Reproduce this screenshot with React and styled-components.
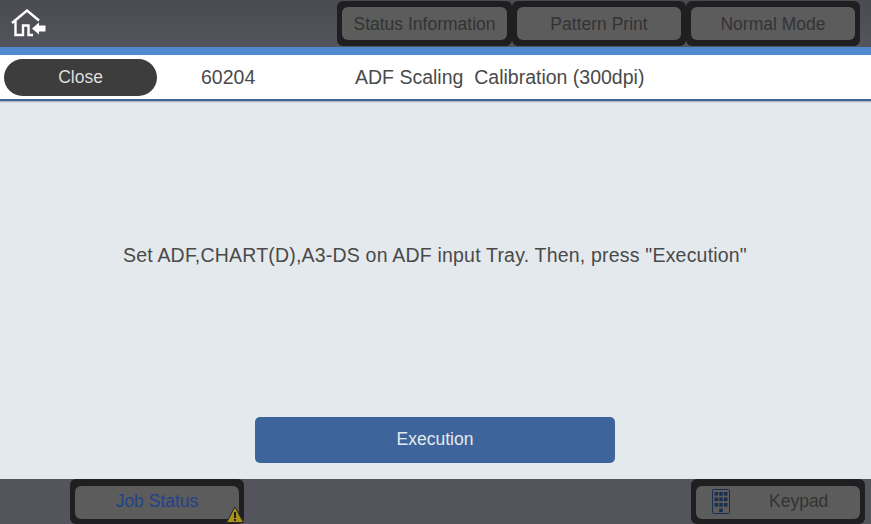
import React from 'react';
import styled, { createGlobalStyle } from 'styled-components';

const GlobalStyle = createGlobalStyle`
  html, body {
    margin: 0;
    padding: 0;
    background: #e4e9ed;
    font-family: "Liberation Sans", Arial, sans-serif;
  }
`;

const Screen = styled.div`
  width: 871px;
  height: 524px;
  display: flex;
  flex-direction: column;
  overflow: hidden;
`;

const Header = styled.header`
  height: 47px;
  box-sizing: border-box;
  padding: 1px 11px 1px 11px;
  display: flex;
  align-items: center;
  justify-content: space-between;
  background: linear-gradient(#4a4a52, #54545c);
`;

const HeaderButtons = styled.div`
  display: flex;
`;

// dark frame around the grey key
const Frame = styled.div`
  width: ${(p) => p.$width || 174}px;
  height: 45px;
  box-sizing: border-box;
  padding: ${(p) => p.$pad || '6px 5px'};
  background: #1f1f21;
  border-radius: 6px;
  display: flex;
  position: relative;
`;

const Key = styled.div`
  flex: 1;
  display: flex;
  align-items: center;
  justify-content: center;
  border-radius: 6px;
  background: #5c5c5c;
  color: ${(p) => p.$color || '#333333'};
  font-size: 17.5px;
`;

const HeaderKey = styled(Key)`
  padding-top: 2px;
`;

const FooterKey = styled(Key)`
  padding-bottom: 2px;
`;

const BlueStrip = styled.div`
  height: 8px;
  background: #4f8ad1;
`;

const TitleRow = styled.div`
  height: 44px;
  flex-shrink: 0;
  box-sizing: border-box;
  padding: 1px 0 0 4px;
  background: #ffffff;
  display: flex;
  align-items: center;
  color: #4a4a4a;
  font-size: 19.5px;
`;

const TitleRule = styled.div`
  position: relative;
  height: 2px;
  background: #3c659c;
  box-shadow: 0 1px 0 #b4b9be, 0 2px 0 #d4d8dc;
`;

const CloseButton = styled.button`
  width: 153px;
  height: 37px;
  padding: 0;
  border: none;
  border-radius: 19px;
  background: #3d3d3d;
  color: #dedede;
  font: inherit;
  font-size: 17.5px;
`;

const JobCode = styled.span`
  width: 154px;
  margin-left: 44px;
`;

const JobTitle = styled.span`
  white-space: pre;
`;

const Content = styled.main`
  flex: 1;
  display: flex;
  flex-direction: column;
  align-items: center;
  background: #e4e9ed;
  padding: 0 1px 16px 0;
`;

const Message = styled.p`
  margin: 143px 0 0;
  flex: 1;
  color: #4a4a4a;
  font-size: 19.5px;
  letter-spacing: 0.2px;
`;

const ExecuteButton = styled.button`
  width: 360px;
  height: 46px;
  padding: 0 0 2px;
  border: none;
  border-radius: 5px;
  background: #3d659c;
  color: #e4e9ed;
  font: inherit;
  font-size: 17.5px;
`;

const Footer = styled.footer`
  height: 45px;
  flex-shrink: 0;
  display: flex;
  align-items: flex-start;
  justify-content: space-between;
  padding: 0 6px 0 70px;
  background: #54545c;
`;

const WarningBadge = styled.svg`
  position: absolute;
  right: 0;
  bottom: 1px;
`;

const KeypadKey = styled(FooterKey)`
  justify-content: flex-start;
  padding-left: 16px;
  gap: 39px;
`;

const HomeIcon = () => (
  <svg width="35" height="29" viewBox="0 0 35 29" fill="none">
    <path
      d="M1 14 L16 1.5 L28 11.5 M4.5 12 V26 H12 V16.5 H17.5 V26 H22"
      stroke="#fff"
      strokeWidth="2.4"
    />
    <path d="M21 19.5 L28 13.5 V16.5 H34.5 V22.5 H28 V25.5 Z" fill="#fff" />
  </svg>
);

const KeypadIcon = () => (
  <svg width="18" height="25" viewBox="0 0 18 25">
    <rect x="0.5" y="0.5" width="17" height="24" rx="1" fill="none" stroke="#1a2f50" />
    {[2.5, 7.2, 11.9].map((x) =>
      [3, 8.5, 14].map((y) => (
        <rect key={`${x}-${y}`} x={x} y={y} width="3.6" height="3.6" fill="#1a2f50" />
      ))
    )}
    <rect x="7.2" y="19.5" width="3.6" height="3.6" fill="#1a2f50" />
  </svg>
);

const App = () => (
  <Screen>
    <GlobalStyle />
    <Header>
      <HomeIcon />
      <HeaderButtons>
        <Frame $width={175}><HeaderKey>Status Information</HeaderKey></Frame>
        <Frame><HeaderKey>Pattern Print</HeaderKey></Frame>
        <Frame><HeaderKey>Normal Mode</HeaderKey></Frame>
      </HeaderButtons>
    </Header>
    <BlueStrip />
    <TitleRow>
      <CloseButton>Close</CloseButton>
      <JobCode>60204</JobCode>
      <JobTitle>ADF Scaling  Calibration (300dpi)</JobTitle>
    </TitleRow>
    <TitleRule />
    <Content>
      <Message>Set ADF,CHART(D),A3-DS on ADF input Tray. Then, press "Execution"</Message>
      <ExecuteButton>Execution</ExecuteButton>
    </Content>
    <Footer>
      <Frame $pad="7px 5px 5px">
        <FooterKey $color="#21428a">Job Status</FooterKey>
        <WarningBadge width="18" height="17" viewBox="0 0 18 17">
          <path d="M9 1 L17.5 16.5 H0.5 Z" fill="#a8921a" stroke="#2a2a20" strokeWidth="1" />
          <rect x="8" y="6" width="2" height="6" fill="#1f1f21" />
          <rect x="8" y="13" width="2" height="2" fill="#1f1f21" />
        </WarningBadge>
      </Frame>
      <Frame $pad="7px 5px 5px">
        <KeypadKey>
          <KeypadIcon />
          Keypad
        </KeypadKey>
      </Frame>
    </Footer>
  </Screen>
);

export default App;
